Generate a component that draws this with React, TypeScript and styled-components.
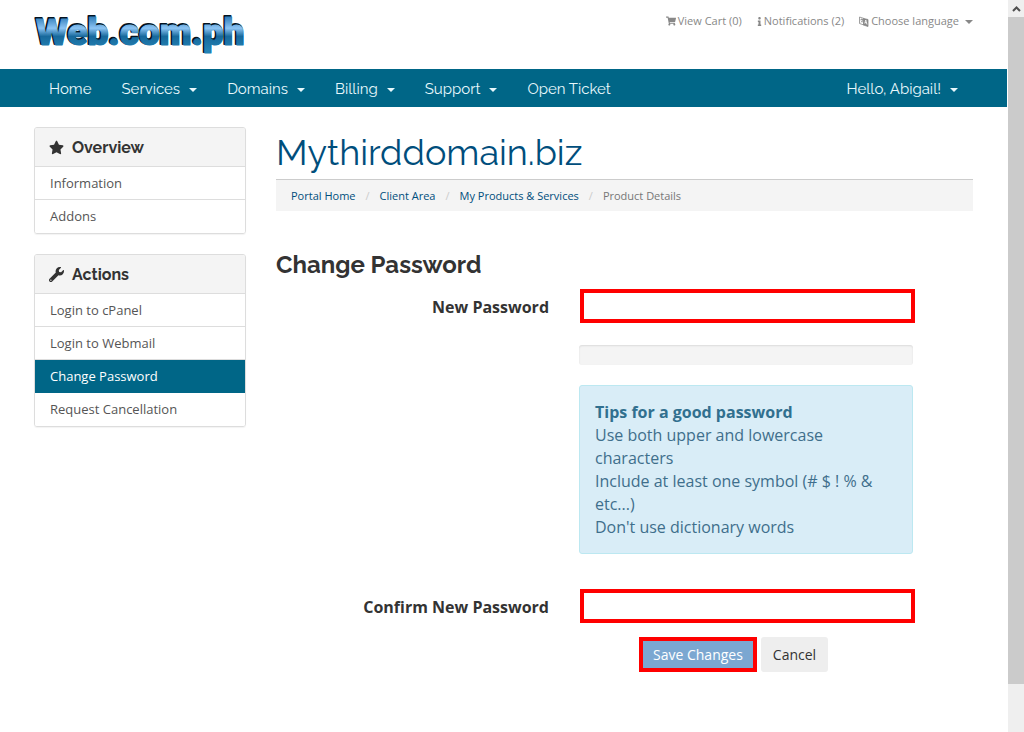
import React from "react";
import styled, { createGlobalStyle } from "styled-components";
import { FaShoppingCart, FaInfo, FaStar, FaWrench } from "react-icons/fa";

const body = `"Open Sans", "Noto Sans", sans-serif`;
const display = `Raleway, Lato, "Open Sans", sans-serif`;

const GlobalStyle = createGlobalStyle`
  *, *::before, *::after { box-sizing: border-box; }
  body { margin: 0; background: #fff; color: #333; font: 16px/23px ${body}; }
  a { text-decoration: none; }
  button, input { font-family: inherit; }
`;

const Shell = styled.div`
  display: flex;
  min-height: 100vh;
`;

const Page = styled.div`
  flex: 1;
  min-width: 0;
`;

const Container = styled.div`
  max-width: 969px;
  margin: 0 auto;
  padding: 0 15px;
`;

const Header = styled(Container).attrs({ as: "header" })`
  display: flex;
  justify-content: space-between;
  align-items: flex-start;
  height: 69px;
  padding-top: 10px;
`;

const LogoLink = styled.a`
  display: block;
  line-height: 0;
`;

const TopLinks = styled.nav`
  display: flex;
  gap: 15px;
  padding-top: 3px;
`;

const TopLink = styled.a`
  display: flex;
  align-items: center;
  gap: 2px;
  color: #888;
  font-size: 11px;
  line-height: 16px;
`;

const InfoIcon = styled(FaInfo)`
  width: 5px;
  height: 9px;
`;

const Caret = styled.span<{ $gap: number }>`
  width: 0;
  height: 0;
  margin: 2px 0 0 ${(p) => p.$gap}px;
  border: 4px solid transparent;
  border-top-color: currentColor;
  border-bottom: 0;
`;

const NavBar = styled.nav`
  background: #006687;
`;

const NavInner = styled(Container)`
  display: flex;
`;

const NavLink = styled.a<{ $end?: boolean }>`
  display: flex;
  align-items: center;
  height: 38px;
  padding: 2px 15px 0;
  margin-left: ${(p) => (p.$end ? "auto" : "0")};
  color: #e8f8fc;
  font: 15px/20px ${display};
`;

const Columns = styled(Container)`
  display: grid;
  grid-template-columns: 212px minmax(0, 1fr);
  gap: 30px;
  align-items: start;
  padding-top: 20px;
`;

const Sidebar = styled.aside`
  display: grid;
  gap: 20px;
`;

const Panel = styled.section`
  border: 1px solid #ddd;
  border-radius: 3px;
  box-shadow: 0 1px 1px rgba(0, 0, 0, 0.05);
  overflow: hidden;
`;

const PanelTitle = styled.h2`
  display: flex;
  align-items: center;
  gap: 8px;
  height: 39px;
  margin: 0;
  padding: 1px 14px 0;
  background: #f4f4f4;
  border-bottom: 1px solid #ddd;
  font: bold 16px/20px ${display};
`;

const PanelLink = styled.a<{ $active?: boolean }>`
  display: block;
  height: 33px;
  padding: 0 15px;
  color: ${(p) => (p.$active ? "#fff" : "#555")};
  background: ${(p) => (p.$active ? "#006687" : "#fff")};
  border-bottom: 1px solid ${(p) => (p.$active ? "#006687" : "#ddd")};
  font-size: 13px;
  line-height: 33px;
  &:last-child { border-bottom: 0; }
`;

const PageTitle = styled.h1`
  margin: 0;
  padding-bottom: 2px;
  color: #004e7c;
  font: 400 36px/50px ${display};
`;

const Crumbs = styled.ol`
  display: flex;
  margin: 0;
  padding: 0 15px;
  list-style: none;
  background: #f4f4f4;
  border-top: 1px solid #ccc;
  font-size: 11px;
  line-height: 31px;
`;

const Crumb = styled.li`
  color: #777;
  a { color: #004e7c; }
  & + &::before {
    content: "/";
    padding: 0 10px;
    color: #ccc;
  }
`;

const SectionTitle = styled.h3`
  margin: 39px 0 9px;
  font: bold 24px/30px ${display};
`;

const Form = styled.form`
  display: block;
`;

const FieldRow = styled.div`
  display: grid;
  grid-template-columns: 273fr 334fr 30fr;
  column-gap: 30px;
`;

const Label = styled.label`
  grid-column: 1;
  font-weight: bold;
  line-height: 36px;
  text-align: right;
`;

const PasswordInput = styled.input`
  width: calc(100% + 1px);
  height: 34px;
  margin: 0 0 0 1px;
  padding: 0 12px;
  background: #fff;
  border: 4px solid #f00;
  font-size: 16px;
  outline: 0;
`;

const Help = styled.div`
  grid-column: 2;
  padding: 20px 0 35px;
`;

const Meter = styled.div`
  height: 20px;
  margin-bottom: 20px;
  background: #f4f4f4;
  border-radius: 3px;
  box-shadow: inset 0 1px 2px rgba(0, 0, 0, 0.1);
`;

const Tips = styled.div`
  padding: 15px 15px 14px;
  color: #3f6f8c;
  background: #d9edf7;
  border: 1px solid #bce8f1;
  border-radius: 3px;
  strong { color: #31708f; }
`;

const Actions = styled.div`
  display: grid;
  grid-template-columns: 333px 1fr;
  column-gap: 30px;
  padding-top: 12px;
`;

const Buttons = styled.div`
  grid-column: 2;
  display: flex;
  gap: 4px;
`;

const Button = styled.button<{ $primary?: boolean }>`
  height: 35px;
  padding: 0 ${(p) => (p.$primary ? 10 : 12)}px;
  color: ${(p) => (p.$primary ? "#fff" : "#333")};
  background: ${(p) => (p.$primary ? "#7ba7d1" : "#eee")};
  border: ${(p) => (p.$primary ? "4px solid #f00" : "0")};
  border-radius: ${(p) => (p.$primary ? 0 : 3)}px;
  font-size: 14px;
  white-space: nowrap;
`;

const ScrollBar = styled.div`
  position: sticky;
  top: 0;
  display: flex;
  flex-direction: column;
  width: 17px;
  height: 100vh;
  background: #efefef;
  border-left: 1px solid #fff;
`;

const ScrollArrow = styled.div`
  display: grid;
  place-items: center;
  height: 17px;
`;

const ScrollThumb = styled.div`
  height: calc(93% - 14px);
  background: #cbcbcb;
`;

const Logo = () => (
  <svg width="220" height="50" viewBox="0 0 220 50" role="img" aria-label="Web.com.ph">
    <defs>
      <linearGradient id="logoFill" gradientUnits="userSpaceOnUse" x1="0" y1="6" x2="0" y2="40">
        <stop offset="0" stopColor="#2a78b4" />
        <stop offset="0.36" stopColor="#8cc4f4" />
        <stop offset="0.6" stopColor="#17699c" />
        <stop offset="1" stopColor="#2482b4" />
      </linearGradient>
    </defs>
    <g fontFamily="Impact, Roboto, sans-serif" fontWeight="900" fontSize="37" strokeLinejoin="round">
      <text x="1" y="34" fill="#02131f" stroke="#02131f" strokeWidth="2">Web.com.ph</text>
      <text x="2" y="35" fill="url(#logoFill)" stroke="url(#logoFill)" strokeWidth="1">Web.com.ph</text>
    </g>
  </svg>
);

const LanguageIcon = () => (
  <svg width="10" height="11" viewBox="0 0 20 22" fill="none" stroke="currentColor" strokeWidth="1.6" aria-hidden="true">
    <path d="M1 2l9 3v13l-9 -3z" />
    <path d="M3 7h5M5.500 5v2M7.500 7c-.5 3 -2 5 -4 6M4 9l4 4" />
    <path d="M9 5l9 2v14l-9 -3z" fill="currentColor" />
    <path d="M11.500 15l2 -7 2.500 9M12 13l3.500 1" stroke="#fff" />
  </svg>
);

const navItems = [
  { text: "Home" },
  { text: "Services", menu: true },
  { text: "Domains", menu: true },
  { text: "Billing", menu: true },
  { text: "Support", menu: true },
  { text: "Open Ticket" },
];

const actions = ["Login to cPanel", "Login to Webmail", "Change Password", "Request Cancellation"];

export default function App() {
  return (
    <>
      <GlobalStyle />
      <Shell>
        <Page>
          <Header>
            <LogoLink href="#"><Logo /></LogoLink>
            <TopLinks>
              <TopLink href="#"><FaShoppingCart size={10} />View Cart (0)</TopLink>
              <TopLink href="#"><InfoIcon />Notifications (2)</TopLink>
              <TopLink href="#"><LanguageIcon />Choose language<Caret $gap={4} /></TopLink>
            </TopLinks>
          </Header>
          <NavBar>
            <NavInner>
              {navItems.map((item) => (
                <NavLink key={item.text} href="#">{item.text}{item.menu && <Caret $gap={9} />}</NavLink>
              ))}
              <NavLink href="#" $end>Hello, Abigail!<Caret $gap={9} /></NavLink>
            </NavInner>
          </NavBar>
          <Columns>
            <Sidebar>
              <Panel>
                <PanelTitle><FaStar size={15} />Overview</PanelTitle>
                <PanelLink href="#">Information</PanelLink>
                <PanelLink href="#">Addons</PanelLink>
              </Panel>
              <Panel>
                <PanelTitle><FaWrench size={15} />Actions</PanelTitle>
                {actions.map((text) => (
                  <PanelLink key={text} href="#" $active={text === "Change Password"}>{text}</PanelLink>
                ))}
              </Panel>
            </Sidebar>
            <main>
              <PageTitle>Mythirddomain.biz</PageTitle>
              <Crumbs>
                <Crumb><a href="#">Portal Home</a></Crumb>
                <Crumb><a href="#">Client Area</a></Crumb>
                <Crumb><a href="#">My Products &amp; Services</a></Crumb>
                <Crumb>Product Details</Crumb>
              </Crumbs>
              <SectionTitle>Change Password</SectionTitle>
              <Form>
                <FieldRow>
                  <Label htmlFor="new-password">New Password</Label>
                  <PasswordInput id="new-password" type="password" />
                  <Help>
                    <Meter />
                    <Tips>
                      <strong>Tips for a good password</strong><br />
                      Use both upper and lowercase characters<br />
                      Include at least one symbol (# $ ! % &amp; etc...)<br />
                      Don't use dictionary words
                    </Tips>
                  </Help>
                </FieldRow>
                <FieldRow>
                  <Label htmlFor="confirm-password">Confirm New Password</Label>
                  <PasswordInput id="confirm-password" type="password" />
                </FieldRow>
                <Actions>
                  <Buttons>
                    <Button type="submit" $primary>Save Changes</Button>
                    <Button type="reset">Cancel</Button>
                  </Buttons>
                </Actions>
              </Form>
            </main>
          </Columns>
        </Page>
        <ScrollBar aria-hidden="true">
          <ScrollArrow>
            <svg width="9" height="6" viewBox="0 0 9 6" fill="none" stroke="#505050" strokeWidth="2"><path d="M1 5l3.500 -3.500L8 5" /></svg>
          </ScrollArrow>
          <ScrollThumb />
        </ScrollBar>
      </Shell>
    </>
  );
}
